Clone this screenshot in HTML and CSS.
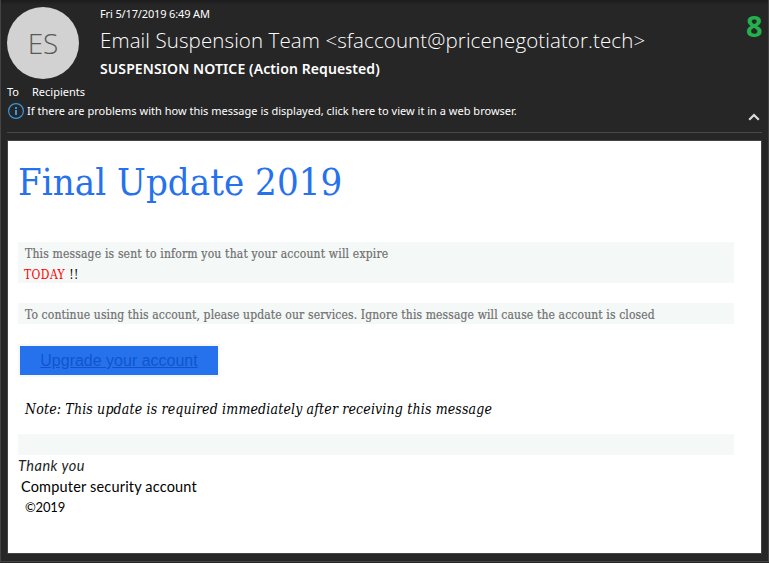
FILE: index.html
```html
<!DOCTYPE html>
<html lang="en">
<head>
<meta charset="utf-8">
<title>SUSPENSION NOTICE (Action Requested)</title>
<link rel="stylesheet" href="styles.css">
</head>
<body>
<div class="window">
  <header class="header">
    <div class="summary">
      <div class="avatar"><span>ES</span></div>
      <div class="meta">
        <div class="date"><span>Fri 5/17/2019 6:49 AM</span></div>
        <h1 class="sender"><span>Email Suspension Team &lt;sfaccount@pricenegotiator.tech&gt;</span></h1>
        <h2 class="subject"><span>SUSPENSION NOTICE (Action Requested)</span></h2>
      </div>
      <div class="number">8</div>
    </div>
    <div class="to"><span class="label">To</span><span class="names">Recipients</span></div>
    <div class="info">
      <svg class="info-icon" width="16" height="16" viewBox="0 0 16 16"><circle cx="8" cy="8" r="7.4" fill="none" stroke="#3a96dd" stroke-width="1.2"/><path d="M7 4h2v2H7zM7 7h2v5H7z" fill="#3a96dd"/></svg>
      <span class="info-text">If there are problems with how this message is displayed, click here to view it in a web browser.</span>
      <svg class="chevron" width="12" height="8" viewBox="0 0 12 8"><path d="M1.2 6.8 6 2l4.8 4.8" fill="none" stroke="#dcdcdc" stroke-width="2.2"/></svg>
    </div>
  </header>
  <main class="message">
    <h3 class="title"><span>Final Update 2019</span></h3>
    <div class="band first">
      <p class="notice"><span class="expire">This message is sent to inform you that your account will expire</span></p>
      <p class="today"><span class="red">TODAY</span><span class="marks">!!</span></p>
    </div>
    <div class="band second"><p class="notice"><span class="continue">To continue using this account, please update our services. Ignore this message will cause the account is closed</span></p></div>
    <div class="button"><a class="link">Upgrade your account</a></div>
    <p class="note"><span>Note: This update is required immediately after receiving this message</span></p>
    <div class="band empty"></div>
    <p class="thanks"><span>Thank you</span></p>
    <p class="team"><span>Computer security account</span></p>
    <p class="year"><span>©2019</span></p>
  </main>
</div>
</body>
</html>
```
FILE: styles.css
```css
* { box-sizing: border-box; }
body, h1, h2, h3, p { margin: 0; font-weight: 400; }
body { width: 769px; height: 563px; overflow: hidden; background: #262626; }
.window {
  height: 562px;
  padding: 0 6px 7px 6px;
  border: solid #444;
  border-width: 0 1px 1px;
  background: linear-gradient(#1b1b1b, #262626 5px);
  font-family: "Noto Sans", "Open Sans", sans-serif;
  color: #fff;
  white-space: nowrap;
}
.header { height: 133px; border-bottom: 1px solid #484848; }
.summary { display: flex; height: 82px; padding-top: 7px; }
.avatar {
  width: 72px; height: 72px; border-radius: 50%;
  background: #d2d2d2; color: #595959;
  font: 300 28px/73px "Open Sans", sans-serif;
  text-align: center; flex: none;
}
.meta { flex: 1; margin-left: 21px; }
.date { height: 15px; font-size: 11px; line-height: 13px; letter-spacing: -.14px; }
.sender { height: 37px; font: 300 20.5px/37px "Open Sans", sans-serif; letter-spacing: .1px; }
.subject { height: 20px; font-size: 14px; line-height: 20px; font-weight: 600; letter-spacing: .1px; }
.number { width: 16px; font: 700 29px/37px "Noto Sans", sans-serif; color: #22b14c; }
.to { height: 19px; font-size: 11px; line-height: 19px; display: flex; }
.label { width: 25px; }
.info { height: 20px; display: flex; align-items: center; font-size: 11px; padding-left: 1px; }
.info-icon { flex: none; margin-right: 3px; }
.info-text { flex: 1; line-height: 18px; letter-spacing: .012px; }
.chevron { margin: 11px 2px 0 0; }
.message {
  height: 414px; margin-top: 7px; padding: 0 27px 0 10px;
  border: 1px solid #444; background: #fff; color: #000;
  font-family: "DejaVu Serif Condensed", "DejaVu Serif", serif;
  font-stretch: condensed;
}
.title { height: 101px; font-size: 38px; line-height: 83px; color: #2672ec; letter-spacing: .04px; }
.band { background: #f4f8f7; }
.first { height: 41px; }
.second { height: 21px; margin-top: 20px; }
.empty { height: 21px; }
.notice { height: 21px; padding-left: 7px; font-size: 12px; line-height: 25px; color: #707070; -webkit-text-stroke: .2px #707070; }
.expire { letter-spacing: .19px; }
.continue { letter-spacing: .135px; }
.today { height: 20px; padding-left: 6px; font-size: 12px; line-height: 25px; display: flex; gap: 4px; letter-spacing: .4px; }
.red { color: #f00; }
.button {
  width: 202px; height: 33px; margin-top: 20px;
  border: 2px solid #f4f8f7; background: #2672ec;
  font: 16px/30px "Liberation Sans", sans-serif; text-align: center;
}
.link { color: #1155cc; text-decoration: underline; }
.note { height: 57px; padding-left: 7px; font-size: 14px; line-height: 64px; font-style: italic; letter-spacing: .16px; }
.thanks, .team, .year { height: 21px; font: 14.5px/22px Lato, sans-serif; }
.thanks { font-style: italic; color: #222; letter-spacing: .5px; }
.team { padding-left: 3px; letter-spacing: .18px; }
.year { padding-left: 7px; font-size: 13px; line-height: 21px; letter-spacing: -.2px; }
```
